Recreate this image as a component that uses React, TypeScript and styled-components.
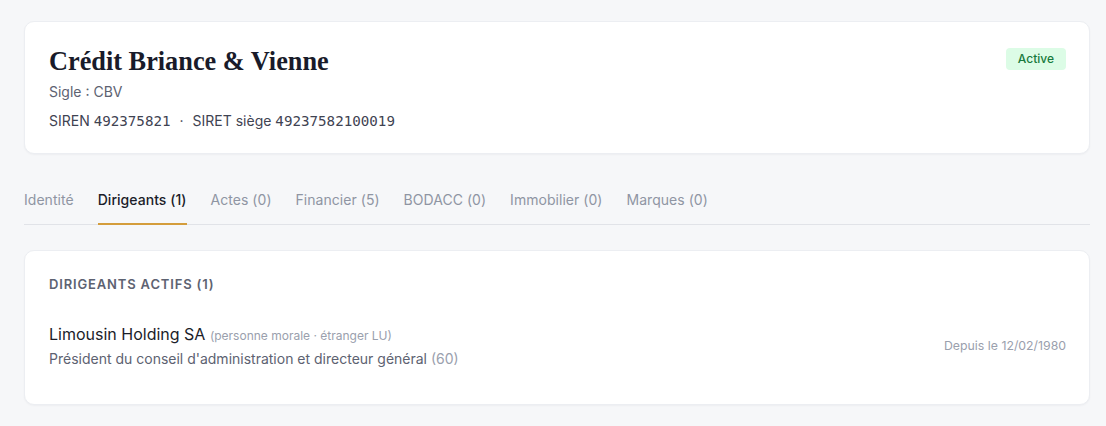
import styled, { createGlobalStyle } from 'styled-components'

const GlobalStyle = createGlobalStyle`
  html, body {
    margin: 0;
    padding: 0;
    background: #f6f7f9;
  }
  body {
    font-family: Inter, 'Noto Sans', sans-serif;
    color: #1b1d29;
    -webkit-font-smoothing: antialiased;
  }
`

const tabs = [
  'Identité',
  'Dirigeants (1)',
  'Actes (0)',
  'Financier (5)',
  'BODACC (0)',
  'Immobilier (0)',
  'Marques (0)',
]

const App = () => {
  return (
    <Page>
      <GlobalStyle />
      <HeaderCard>
        <HeaderInfo>
          <CompanyName>Crédit Briance &amp; Vienne</CompanyName>
          <Sigle>Sigle : CBV</Sigle>
          <Identifiers>
            SIREN <Mono>492375821</Mono>
            <Dot>·</Dot>
            SIRET siège <Mono>49237582100019</Mono>
          </Identifiers>
        </HeaderInfo>
        <StatusBadge>Active</StatusBadge>
      </HeaderCard>

      <TabBar>
        {tabs.map((t) => (
          <Tab key={t} $active={t === 'Dirigeants (1)'}>
            {t}
          </Tab>
        ))}
      </TabBar>

      <SectionCard>
        <SectionTitle>Dirigeants actifs (1)</SectionTitle>
        <PersonRow>
          <PersonInfo>
            <PersonName>
              Limousin Holding SA{' '}
              <PersonKind>(personne morale · étranger LU)</PersonKind>
            </PersonName>
            <PersonRole>
              Président du conseil d'administration et directeur général{' '}
              <RoleCode>(60)</RoleCode>
            </PersonRole>
          </PersonInfo>
          <Since>Depuis le 12/02/1980</Since>
        </PersonRow>
      </SectionCard>
    </Page>
  )
}

const Page = styled.div`
  padding: 21px 16px 20px 24px;
  display: flex;
  flex-direction: column;
`

const Card = styled.div`
  background: #ffffff;
  border: 1px solid #eceef2;
  border-radius: 10px;
  box-shadow: 0 1px 2px rgba(20, 24, 40, 0.04);
`

const HeaderCard = styled(Card)`
  display: flex;
  justify-content: space-between;
  align-items: flex-start;
  padding: 24px 24px 22px 24px;
`

const HeaderInfo = styled.div`
  display: flex;
  flex-direction: column;
`

const CompanyName = styled.h1`
  margin: 0;
  font-family: 'Liberation Serif', 'DejaVu Serif', serif;
  font-weight: 700;
  font-size: 26.3px;
  line-height: 32px;
  color: #191b2a;
`

const Sigle = styled.div`
  margin-top: 4px;
  font-size: 14px;
  line-height: 20px;
  color: #5d6271;
`

const Identifiers = styled.div`
  margin-top: 9px;
  font-size: 14px;
  line-height: 20px;
  color: #3f4352;
`

const Mono = styled.span`
  font-family: 'DejaVu Sans Mono', 'Liberation Mono', monospace;
  font-size: 14.2px;
`

const Dot = styled.span`
  margin: 0 9px;
`

const StatusBadge = styled.span`
  margin-top: 2px;
  margin-right: -1px;
  padding: 3px 12px;
  border-radius: 4px;
  background: #dcfce6;
  color: #177a3c;
  font-size: 12px;
  font-weight: 500;
  line-height: 16px;
`

const TabBar = styled.div`
  display: flex;
  gap: 24px;
  margin-top: 24px;
  border-bottom: 1px solid #e1e3e8;
`

const Tab = styled.div<{ $active?: boolean }>`
  padding: 12px 0 13px;
  font-size: 14px;
  line-height: 20px;
  letter-spacing: 0.04px;
  font-weight: ${(p) => (p.$active ? 500 : 400)};
  color: ${(p) => (p.$active ? '#1b1d29' : '#8f95a3')};
  border-bottom: 2px solid ${(p) => (p.$active ? '#d49d3c' : 'transparent')};
  margin-bottom: -1px;
`

const SectionCard = styled(Card)`
  margin-top: 25px;
  padding: 23px 23px 23px 24px;
`

const SectionTitle = styled.h2`
  margin: 0;
  font-size: 13px;
  line-height: 20px;
  font-weight: 600;
  letter-spacing: 0.065em;
  text-transform: uppercase;
  color: #5d6271;
`

const PersonRow = styled.div`
  display: flex;
  align-items: center;
  justify-content: space-between;
  margin-top: 16px;
  padding: 12px 0;
`

const PersonInfo = styled.div`
  display: flex;
  flex-direction: column;
  gap: 1px;
`

const PersonName = styled.div`
  font-size: 16px;
  line-height: 24px;
  color: #1b1d29;
`

const PersonKind = styled.span`
  font-size: 12px;
  color: #9aa0ad;
`

const PersonRole = styled.div`
  font-size: 14px;
  line-height: 20px;
  color: #5d6271;
`

const RoleCode = styled.span`
  color: #9aa0ad;
`

const Since = styled.div`
  font-size: 12.3px;
  line-height: 16px;
  color: #9aa0ad;
`

export default App
